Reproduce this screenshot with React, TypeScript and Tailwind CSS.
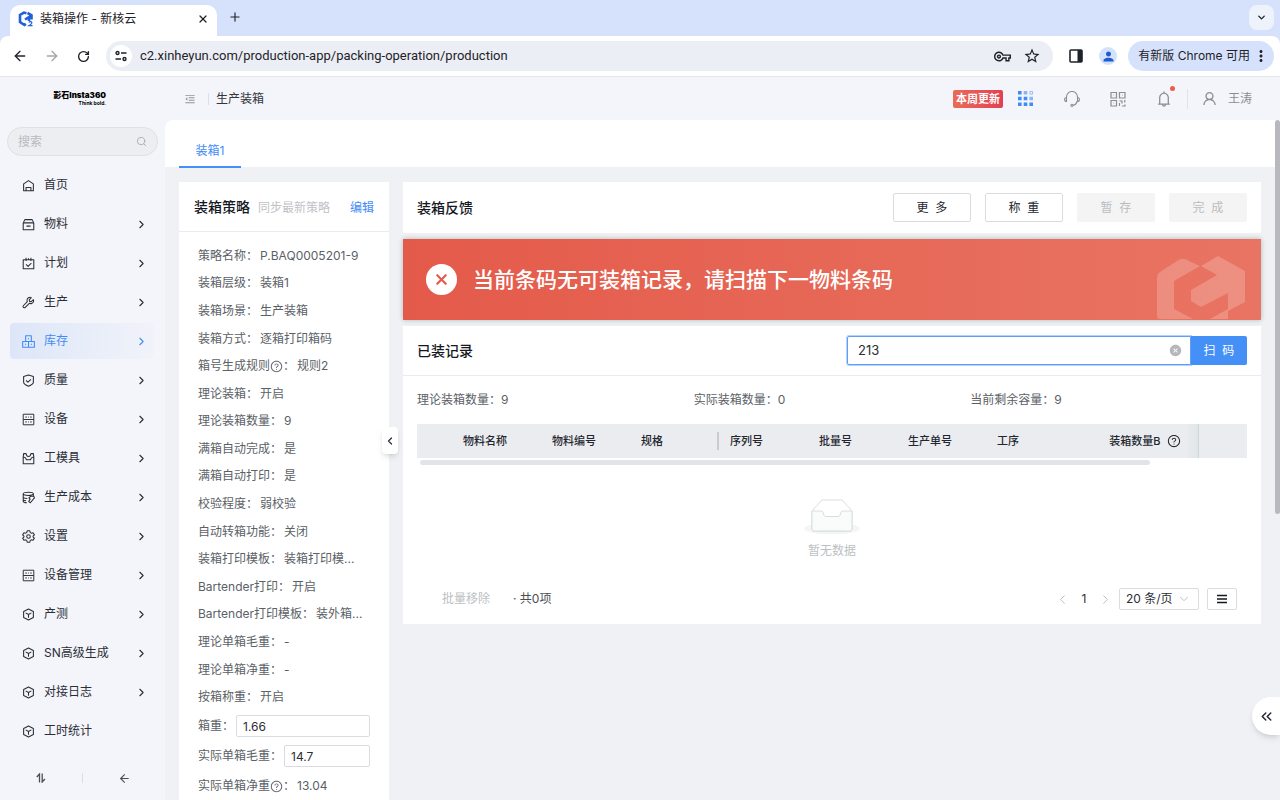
import React, { useState } from 'react';
import {
  ArrowLeft, ArrowRight, ChevronDown, ChevronLeft, ChevronRight, ChevronsLeft,
  Plus, RotateCw, Search, X,
} from 'lucide-react';
import { AiOutlineBell, AiOutlineMenuFold, AiOutlineQuestionCircle, AiOutlineUser, AiFillCloseCircle } from 'react-icons/ai';
import { MdMoreVert, MdOutlineStarBorder, MdOutlineVpnKey, MdPerson } from 'react-icons/md';

const icons: Record<string, React.ReactNode> = {
  home: <path d="M2 6 8 2l6 4v8.5H2zM5 14.500v-4h6v4" />,
  material: <path d="M1.500 6h13v8.500h-13zM1.500 6 3.500 2h9l2 4M5.500 10h5" />,
  plan: <path d="M1.500 3.500h13v11h-13zM5 1v4M8 1.500v2M11 1v4M5 9l2.500 2.500L11.500 7.500" />,
  wrench: <path d="M14 4.500 11.500 7 9.300 6.600 9 4.500 11.500 2C9.500 1 7.300 2 6.500 3.800c-.4 1-.4 2.200 0 3.200L1.600 12c-.8.900 0 2.400 1.200 2.500.5 0 .9-.2 1.200-.5l5-5c2 .9 4.300 0 5.100-1.800.4-.9.400-1.900-.1-2.700z" />,
  stock: <path d="M4.500 1h7v7h-7zM.8 8h7.200v7H.8zM8 8h7.200v7H8zM7.300 4.500h1.400M3.700 11.500h1.400M10.900 11.500h1.400" />,
  shield: <path d="M8 1.200 14 3v7c0 2-2.500 3.500-6 5-3.500-1.500-6-3-6-5V3zM5 8l2.300 2L11 6.500" />,
  device: <path d="M1.500 1.500h13v13h-13zM1.500 8h13M4 5h2M7.500 5h1M10 5h2M4 11h2M7.500 11h1M10 11h2" strokeWidth="1.2" />,
  tools: <path d="M1.500 6v8.500h13V6L14 2h-3l-.8 2.500c-1 1.300-3.400 1.300-4.400 0L5 2H2zM2 6.500c2.500-.5 3 1.500 3.500 3h5c.5-1.500 1-3.500 3.500-3" />,
  cost: <path d="M1.500 3.500c0-1.200 2.700-2 6.200-2s6.300.8 6.300 2-2.800 2-6.300 2-6.200-.8-6.200-2zM1.500 3.500v9c0 1 2 1.800 4.500 2M1.500 7.500c0 1 2 1.700 5 1.800M1.500 10.500c0 .8 1.500 1.400 3.500 1.600M14 3.500v3M8.500 8.500l2-2h4l.8 2-5 6-2-1.500 1.700-3z" />,
  gear: (
    <>
      <path d="M6.400 1h3.200l.6 2.200 1.200.7 2.200-.6 1.600 2.700-1.600 1.500v1l1.600 1.500-1.600 2.700-2.200-.6-1.200.7-.6 2.200H6.400l-.6-2.200-1.200-.7-2.200.6L.8 10l1.600-1.500v-1L.8 6l1.600-2.700 2.200.6 1.200-.7z" />
      <circle cx="8" cy="8" r="2.200" />
    </>
  ),
  cube: <path d="M8 1.200 14 4.200v7.600l-6 3-6-3V4.200zM4.500 6 8 8l3.500-2M8 8v4" />,
};

const menu = [
  { icon: 'home', label: '首页', leaf: true },
  { icon: 'material', label: '物料' },
  { icon: 'plan', label: '计划' },
  { icon: 'wrench', label: '生产' },
  { icon: 'stock', label: '库存', active: true },
  { icon: 'shield', label: '质量' },
  { icon: 'device', label: '设备' },
  { icon: 'tools', label: '工模具' },
  { icon: 'cost', label: '生产成本' },
  { icon: 'gear', label: '设置' },
  { icon: 'device', label: '设备管理' },
  { icon: 'cube', label: '产测' },
  { icon: 'cube', label: 'SN高级生成' },
  { icon: 'cube', label: '对接日志' },
  { icon: 'cube', label: '工时统计', leaf: true },
];

const strategy = [
  { label: '策略名称', value: 'P.BAQ0005201-9' },
  { label: '装箱层级', value: '装箱1' },
  { label: '装箱场景', value: '生产装箱' },
  { label: '装箱方式', value: '逐箱打印箱码' },
  { label: '箱号生成规则', value: '规则2', help: true },
  { label: '理论装箱', value: '开启' },
  { label: '理论装箱数量', value: '9' },
  { label: '满箱自动完成', value: '是' },
  { label: '满箱自动打印', value: '是' },
  { label: '校验程度', value: '弱校验' },
  { label: '自动转箱功能', value: '关闭' },
  { label: '装箱打印模板', value: '装箱打印模...' },
  { label: 'Bartender打印', value: '开启' },
  { label: 'Bartender打印模板', value: '装外箱...' },
  { label: '理论单箱毛重', value: '-' },
  { label: '理论单箱净重', value: '-' },
  { label: '按箱称重', value: '开启' },
];

const columns = ['物料名称', '物料编号', '规格', '序列号', '批量号', '生产单号', '工序'];

const BrowserBar = () => (
  <div className="shrink-0 bg-[#d6e2fc] text-[#1f2328]">
    <div className="flex h-9 items-end pl-2.5 pr-1.5">
      <div className="flex h-[31px] w-[207px] items-center rounded-t-[10px] bg-white px-2 pb-1 text-xs">
        <svg viewBox="0 0 16 16" className="mr-1.5 size-4" fill="none">
          <path d="M8.500 2.200 6 1.600 2 4v7l4.500 3 1.500-1M7 8.500l4-2.500v4M9.500 2l4 2.200v4.300" stroke="#2160d8" strokeWidth="2.6" />
          <path d="M11 11.500c.5-1.300 3.300-1.200 2.800.6-.3.900-1.700 1.700-2.800 2.500h3.500" stroke="#2160d8" strokeWidth="1.2" />
        </svg>
        <span className="flex-1">装箱操作 - 新核云</span>
        <button type="button" aria-label="关闭标签页"><X size={12} strokeWidth={2.5} /></button>
      </div>
      <button type="button" aria-label="新标签页" className="mb-3 ml-[11px]"><Plus size={14} /></button>
      <button type="button" aria-label="搜索标签页" className="mb-1.5 ml-auto flex size-[25px] items-center justify-center rounded-lg bg-[#eef2fb]">
        <ChevronDown size={11} strokeWidth={3} />
      </button>
    </div>
    <div className="flex h-[41px] items-center rounded-t-lg border-b border-[#e4e6ea] bg-white pl-3 pr-1.5">
      <button type="button" aria-label="后退"><ArrowLeft size={16} /></button>
      <button type="button" aria-label="前进" className="ml-4 text-[#a3a5a9]"><ArrowRight size={16} /></button>
      <button type="button" aria-label="刷新" className="ml-[17px]"><RotateCw size={13} strokeWidth={2.5} /></button>
      <div className="ml-4 flex h-[30px] flex-1 items-center rounded-full bg-[#ebeef5] pl-1 pr-3">
        <span className="flex size-[22px] items-center justify-center rounded-full bg-white">
          <svg viewBox="0 0 12 12" className="size-3" fill="none" stroke="currentColor" strokeWidth="1.4">
            <circle cx="2.5" cy="3" r="1.5" /><path d="M6 3h5.500M.5 9H6" /><circle cx="9.5" cy="9" r="1.5" />
          </svg>
        </span>
        <input
          aria-label="地址"
          readOnly
          defaultValue="c2.xinheyun.com/production-app/packing-operation/production"
          className="ml-2 min-w-0 flex-1 bg-transparent font-[Roboto,sans-serif] text-[13px] outline-none"
        />
        <MdOutlineVpnKey size={17} />
        <MdOutlineStarBorder size={18} className="ml-3" />
      </div>
      <svg viewBox="0 0 14 14" className="ml-4 size-3.5" fill="none">
        <rect x="1" y="1" width="12" height="12" rx="1" stroke="currentColor" strokeWidth="1.6" />
        <path d="M8.500 1H13v12H8.500z" fill="currentColor" />
      </svg>
      <span className="ml-4 flex size-[18px] items-center justify-center rounded-full bg-[#d3e1fb] text-[#1f5bd0]"><MdPerson size={15} /></span>
      <button type="button" className="ml-[11px] flex h-[30px] items-center rounded-full bg-[#d6e2fc] pl-2.5 pr-1 text-xs">
        有新版 Chrome 可用
        <MdMoreVert size={18} className="ml-0.5" />
      </button>
    </div>
  </div>
);

const AppHeader = () => (
  <header className="flex h-[43px] shrink-0 items-center text-xs text-[#33363d]">
    <div className="flex w-[165px] shrink-0 flex-col items-end pr-[59px] text-black">
      <span className="text-[8px] font-black leading-[9px]">影石Insta360</span>
      <span className="text-[5px] font-bold leading-[6px]">Think bold.</span>
    </div>
    <button type="button" aria-label="收起菜单" className="ml-[19px] text-[#8f9299]"><AiOutlineMenuFold size={12} /></button>
    <span className="ml-3 h-3 w-px bg-[#dddfe4]" />
    <span className="ml-[7px]">生产装箱</span>
    <div className="ml-auto flex items-center pr-7 text-[#8a8d94]">
      <span className="rounded-xs bg-linear-to-r from-[#e96b58] to-[#e33e54] px-[3px] text-[11px] font-bold leading-[18px] text-white">本周更新</span>
      <svg viewBox="0 0 15 15" className="ml-[15px] size-[15px] text-[#3f8cf7]" fill="currentColor">
        <path d="M0 0h3.600v3.600H0zM0 5.700h3.600v3.600H0zM0 11.400h3.600V15H0zM5.700 5.700h3.600v3.600H5.700zM5.700 11.400h3.600V15H5.700zM11.400 11.400H15V15h-3.600z" />
        <path d="M5.700 0h3.600v3.600H5.700zM11.400 5.700H15v3.600h-3.600z" opacity=".6" />
        <path d="M11.900.5h2.600v2.600h-2.600z" fill="none" stroke="currentColor" opacity=".5" />
      </svg>
      <svg viewBox="0 0 16 16" className="ml-[31px] size-4" fill="none" stroke="currentColor" strokeWidth="1.1">
        <path d="M2.500 7V6a5.500 5.500 0 0 1 11 0v1M2.500 6.500C1 6.500.6 7.500.6 8.500s.6 2 1.900 2zM13.500 6.500c1.500 0 1.900 1 1.900 2s-.6 2-1.900 2zM13 10.500c-.5 2-2 3.500-4 3.800" />
        <circle cx="8" cy="14.3" r="1.1" />
      </svg>
      <svg viewBox="0 0 16 16" className="ml-[30px] size-4" fill="none" stroke="currentColor" strokeWidth="1.2">
        <path d="M1 1.500h5.500V7H1zM9.500 1.500H15V7H9.500zM1 9.500h5.500V15H1zM3.500 4h.6M12 4h.6M3.500 12h.6M9.500 10h2.500v2.500M14.800 9v2.500M9.500 12v3M12 15h3v-1.500" />
      </svg>
      <button type="button" aria-label="通知" className="relative ml-[29px]">
        <AiOutlineBell size={18} />
        <span className="absolute -right-0.5 -top-1 size-[5px] rounded-full bg-[#ee5b47]" />
      </button>
      <span className="ml-3.5 h-5 w-px bg-[#e1e3e8]" />
      <AiOutlineUser size={17} className="ml-[13px]" />
      <span className="ml-2.5">王涛</span>
    </div>
  </header>
);

const Sidebar = () => (
  <aside className="flex w-[165px] shrink-0 flex-col text-[#2b2e36]">
    <label className="mx-[7px] mt-[7px] flex h-[29px] shrink-0 items-center rounded-full border border-[#dde1e4] bg-[#edeef2] px-2.5">
      <input type="text" placeholder="搜索" aria-label="搜索" className="min-w-0 flex-1 bg-transparent text-xs outline-none placeholder:text-[#b7bac0]" />
      <Search size={11} className="text-[#a9acb2]" />
    </label>
    <nav className="mt-[11px] flex flex-col gap-[3px] pl-2.5 pr-[11px]">
      {menu.map((item) => (
        <a
          key={item.label}
          href="#"
          className={`flex h-9 items-center rounded pl-3 pr-1.5 text-xs ${item.active ? 'bg-linear-to-r from-[#dde6f8] to-[#f1f3fa] text-[#3f8cf7]' : ''}`}
        >
          <svg viewBox="0 0 16 16" className="size-[13px]" fill="none" stroke="currentColor" strokeWidth="1.3" strokeLinejoin="round">
            {icons[item.icon]}
          </svg>
          <span className="ml-[9px] flex-1">{item.label}</span>
          {!item.leaf && <ChevronRight size={13} strokeWidth={2} />}
        </a>
      ))}
    </nav>
    <div className="mt-[21px] flex h-4 shrink-0 items-center text-[#4b4e55]">
      <button type="button" aria-label="排序" className="flex flex-1 justify-center">
        <svg viewBox="0 0 10 10" className="size-2.5" fill="none" stroke="currentColor" strokeWidth="1.3">
          <path d="M.8 4 3.500 1v8.500M6.200.5V9l2.700-3" />
        </svg>
      </button>
      <span className="h-2.5 w-px bg-[#dcdee3]" />
      <button type="button" aria-label="收起" className="flex flex-1 justify-center"><ArrowLeft size={13} /></button>
    </div>
  </aside>
);

const StrategyPanel = () => (
  <section className="relative w-[210px] shrink-0 bg-white text-xs text-[#5b5f67]">
    <div className="flex h-[50px] items-center border-b border-[#e9ebee] px-[15px]">
      <h2 className="text-sm font-medium text-[#16181f]">装箱策略</h2>
      <button type="button" disabled className="ml-2 pt-0.5 text-[#bfc2c7]">同步最新策略</button>
      <a href="#" className="ml-auto pt-0.5 text-[#3f8cf7]">编辑</a>
    </div>
    <div className="mt-2.5 grid h-[469px] auto-rows-fr items-center pl-[19px]">
      {strategy.map((row) => (
        <div key={row.label} className="flex items-center whitespace-nowrap">
          <span>{row.label}</span>
          {row.help && <AiOutlineQuestionCircle size={13} />}
          <span>：</span>
          <span className="ml-0.5">{row.value}</span>
        </div>
      ))}
    </div>
    <div className="pl-[19px] pr-[19px]">
      <div className="flex h-[30px] items-center">
        <label htmlFor="boxWeight">箱重：</label>
        <input id="boxWeight" defaultValue="1.66" className="ml-0.5 h-[22px] min-w-0 flex-1 rounded-xs border border-[#d9dddf] px-1.5 text-[#2b2e36] outline-none" />
      </div>
      <div className="flex h-[30px] items-center">
        <label htmlFor="grossWeight">实际单箱毛重：</label>
        <input id="grossWeight" defaultValue="14.7" className="ml-0.5 h-[22px] min-w-0 flex-1 rounded-xs border border-[#d9dddf] px-1.5 text-[#2b2e36] outline-none" />
      </div>
      <div className="flex h-[30px] items-center">
        <span>实际单箱净重</span>
        <AiOutlineQuestionCircle size={13} />
        <span>：</span>
        <span className="ml-0.5">13.04</span>
      </div>
    </div>
    <button type="button" aria-label="收起装箱策略" className="absolute -right-[9px] top-[245px] flex h-[27px] w-4 items-center justify-center rounded bg-white text-[#2b2e36] shadow-md">
      <ChevronLeft size={12} strokeWidth={2.5} />
    </button>
  </section>
);

const Banner = () => (
  <div className="relative flex h-[81px] items-center overflow-hidden bg-linear-to-r from-[#e45a4a] to-[#e97463] pl-[23px] text-white shadow-[0_0_5px_#a9b8b6]">
    <span className="flex size-[31px] items-center justify-center rounded-full bg-white text-[#e45a4a]"><X size={17} strokeWidth={3} /></span>
    <p className="ml-4 text-[21px] font-medium">当前条码无可装箱记录，请扫描下一物料条码</p>
    <svg viewBox="0 0 88 65" className="absolute bottom-0 right-4 h-[65px] w-[88px]" fill="#fff" fillOpacity=".2">
      <path d="M0 23c0-3 1-5 3-6L20 6c4-3 8-3 12 0l11 5-26 15v28l19 10H3c-2 0-3-1-3-3z" />
      <path d="m44 11 17-10 27 15v31L71 56V38L44 52l-10-6V35l26-15zM53 64l18-10v10z" />
    </svg>
  </div>
);

const Records = () => {
  const [code, setCode] = useState('213');

  return (
    <section className="bg-white text-xs text-[#5b5f67]">
      <div className="flex h-[50px] items-center justify-between border-b border-[#e9ebee] px-3.5">
        <h2 className="text-sm font-medium text-[#16181f]">已装记录</h2>
        <form className="flex w-[400px]" onSubmit={(e) => e.preventDefault()}>
          <div className="flex h-[29px] flex-1 items-center rounded-l-xs border border-[#5f9df8] pl-2.5 pr-2 ring-1 ring-[#b5d3fd]">
            <input
              type="text"
              aria-label="条码"
              value={code}
              onChange={(e) => setCode(e.target.value)}
              className="min-w-0 flex-1 text-[13px] text-[#2b2e36] outline-none"
            />
            <button type="button" aria-label="清空" onClick={() => setCode('')} className="text-[#b4b7bb]"><AiFillCloseCircle size={13} /></button>
          </div>
          <button type="submit" className="relative h-[29px] w-14 rounded-r-xs bg-[#4490f7] text-xs text-white">扫&nbsp; 码</button>
        </form>
      </div>

      <div className="px-3.5 pb-3.5">
        <div className="grid h-12 grid-cols-3 items-center">
          <span>理论装箱数量：9</span>
          <span>实际装箱数量：0</span>
          <span>当前剩余容量：9</span>
        </div>
        <table className="w-full table-fixed bg-[#ebecf0] text-[11px] text-[#23262e]">
          <thead>
            <tr className="h-[34px]">
              <th className="w-[35px]" aria-label="选择" />
              {columns.map((name) => (
                <th key={name} className="w-[89px] p-0 text-left font-medium">
                  <span className={`block leading-[18px] pl-[11px] ${name === '规格' ? 'border-r-2 border-[#c9cbcf]' : ''}`}>{name}</span>
                </th>
              ))}
              <th className="border-r border-[#ccd8d5] bg-linear-to-l from-[#dfe6e6] to-[#ebecf0] to-10% p-0 pr-[17px] font-medium">
                <span className="flex items-center justify-end whitespace-nowrap">
                  装箱数量B<AiOutlineQuestionCircle size={14} className="ml-1.5" />
                </span>
              </th>
              <th className="w-[49px]" aria-label="操作" />
            </tr>
          </thead>
        </table>
        <div className="ml-[3px] mt-0.5 h-[5px] w-[88%] rounded-full bg-[#e2e5e7]" />

        <div className="flex h-[123px] flex-col items-center justify-center pt-1 text-[#bcc1c4]">
          <svg viewBox="0 0 56 36" className="h-9 w-14" fill="none">
            <ellipse cx="28" cy="29.5" rx="28" ry="6" fill="#f4f5f5" />
            <path d="M8 12 18 1h20l10 11v18a2 2 0 0 1-2 2H10a2 2 0 0 1-2-2z" fill="#fff" stroke="#d9dddf" />
            <path d="M8 12h9c2 0 2 1.500 2.500 3s1 2.500 2.500 2.500h12c1.500 0 2-1 2.500-2.500s.5-3 2.500-3h9v18a2 2 0 0 1-2 2H10a2 2 0 0 1-2-2z" fill="#fafbfb" stroke="#d9dddf" />
          </svg>
          <p className="mt-2">暂无数据</p>
        </div>

        <div className="flex h-[22px] items-center pl-[25px] pr-2.5 text-[#4b4e55]">
          <button type="button" disabled className="text-[#bcc1c4]">批量移除</button>
          <span className="ml-[23px]">· 共0项</span>
          <button type="button" aria-label="上一页" className="ml-auto text-[#b4b8bb]"><ChevronLeft size={15} strokeWidth={1.5} /></button>
          <span className="w-7 text-center text-[#2b2e36]">1</span>
          <button type="button" aria-label="下一页" className="text-[#b4b8bb]"><ChevronRight size={15} strokeWidth={1.5} /></button>
          <label className="relative ml-1.5">
            <select aria-label="每页条数" className="block h-[22px] w-20 appearance-none rounded-xs border border-[#d9dddf] bg-white pl-1.5 text-[#2b2e36] outline-none">
              <option>20 条/页</option>
              <option>50 条/页</option>
            </select>
            <ChevronDown size={14} strokeWidth={1.5} className="pointer-events-none absolute right-2 top-1 text-[#b4b8bb]" />
          </label>
          <button type="button" aria-label="列设置" className="ml-2 flex h-[22px] w-[30px] items-center justify-center rounded-xs border border-[#d9dddf] text-[#16181f]">
            <svg viewBox="0 0 10 10" className="size-2.5" stroke="currentColor" strokeWidth="1.5"><path d="M0 1.500h10M0 5h10M0 8.500h10" /></svg>
          </button>
        </div>
      </div>
    </section>
  );
};

const App = () => (
  <div className="relative flex h-screen flex-col overflow-hidden bg-[#f4f5fa] font-[Inter,'Noto_Sans_CJK_SC',sans-serif]">
    <BrowserBar />
    <AppHeader />
    <div className="flex min-h-0 flex-1">
      <Sidebar />
      <main className="relative min-w-0 flex-1 overflow-hidden rounded-tl-lg bg-[#f0f1f5]">
        <div className="flex h-[47px] bg-white pl-3.5" role="tablist">
          <button type="button" role="tab" aria-selected="true" className="-mb-px w-[62px] border-b-2 border-[#4490f7] pt-4 text-xs text-[#3f8cf7]">装箱1</button>
        </div>
        <div className="flex gap-3.5 py-[15px] pl-3.5 pr-[19px]">
          <StrategyPanel />
          <div className="flex min-w-0 flex-1 flex-col gap-1.5">
            <section className="flex h-[51px] shrink-0 items-center gap-3.5 bg-white px-3.5 text-xs text-[#23262e]">
              <h2 className="mr-auto text-sm font-medium text-[#16181f]">装箱反馈</h2>
              <button type="button" className="h-[29px] w-[78px] rounded-xs border border-[#d9dddf]">更&nbsp; 多</button>
              <button type="button" className="h-[29px] w-[78px] rounded-xs border border-[#d9dddf]">称&nbsp; 重</button>
              <button type="button" disabled className="h-[29px] w-[78px] rounded-xs bg-[#f4f4f5] text-[#b9bdbf]">暂&nbsp; 存</button>
              <button type="button" disabled className="h-[29px] w-[78px] rounded-xs bg-[#f4f4f5] text-[#b9bdbf]">完&nbsp; 成</button>
            </section>
            <Banner />
            <Records />
          </div>
        </div>
        {/* page scrollbar thumb */}
        <div className="absolute right-0 top-0 h-[394px] w-[5px] rounded-full bg-[#b7b9be]" />
      </main>
    </div>
    <button type="button" aria-label="展开侧栏" className="absolute right-0 bottom-[65px] flex h-[38px] w-7 items-center rounded-l-full bg-white pl-1.5 text-[#23262e] shadow-md">
      <ChevronsLeft size={17} />
    </button>
  </div>
);

export default App;
